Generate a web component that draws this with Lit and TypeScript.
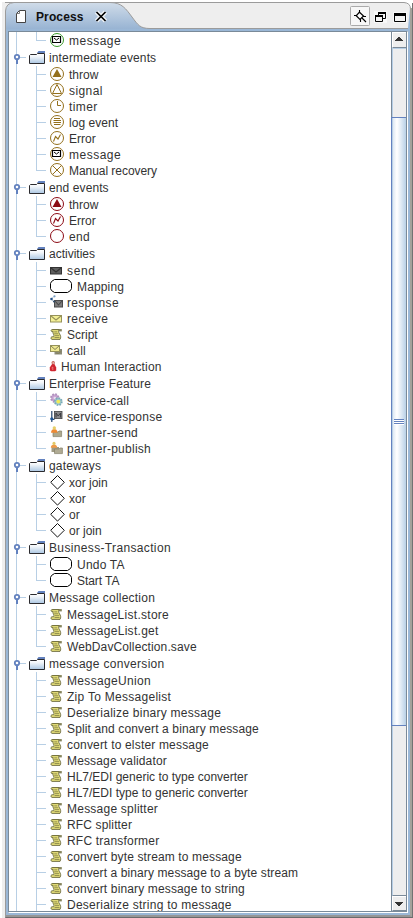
import { LitElement, html, css, svg, nothing } from "lit";
import { customElement, property } from "lit/decorators.js";

type Leaf = [icon: string, label: string];
interface Group { label: string; items: Leaf[]; }

const scripts = (...labels: string[]): Leaf[] => labels.map((l) => ["script", l] as Leaf);

const GROUPS: Group[] = [
  { label: "", items: [["msg-green", "message"]] },
  { label: "intermediate events", items: [
    ["throw", "throw"], ["signal", "signal"], ["timer", "timer"], ["log", "log event"],
    ["error", "Error"], ["msg", "message"], ["manual", "Manual recovery"]] },
  { label: "end events", items: [["throw-red", "throw"], ["error-red", "Error"], ["end", "end"]] },
  { label: "activities", items: [
    ["send", "send"], ["task", "Mapping"], ["response", "response"], ["receive", "receive"],
    ["script", "Script"], ["call", "call"], ["human", "Human Interaction"]] },
  { label: "Enterprise Feature", items: [
    ["gears", "service-call"], ["service", "service-response"],
    ["partner", "partner-send"], ["publish", "partner-publish"]] },
  { label: "gateways", items: [["gate", "xor join"], ["gate", "xor"], ["gate", "or"], ["gate", "or join"]] },
  { label: "Business-Transaction", items: [["task", "Undo TA"], ["task", "Start TA"]] },
  { label: "Message collection", items: scripts("MessageList.store", "MessageList.get", "WebDavCollection.save") },
  { label: "message conversion", items: scripts(
    "MessageUnion", "Zip To Messagelist", "Deserialize binary message",
    "Split and convert a binary message", "convert to elster message", "Message validator",
    "HL7/EDI generic to type converter", "HL7/EDI type to generic converter", "Message splitter",
    "RFC splitter", "RFC transformer", "convert byte stream to message",
    "convert a binary message to a byte stream", "convert binary message to string",
    "Deserialize string to message") },
];

/* Extra pixels that whole-pixel glyph advances add to each label. */
const EXTRA: Record<string, number> = {
  message: 3.5, "intermediate events": 2.5, signal: 2.5, timer: 2, "log event": 0.5, "Manual recovery": -0.7,
  "end events": 1, end: 1, send: 2.5, Mapping: 1, response: 2.5, receive: 2.5, call: 1,
  "Human Interaction": 2.5, "Enterprise Feature": 2.7, "service-call": 2, "service-response": 4,
  "partner-send": 3, "partner-publish": 4, gateways: 1.5, "Business-Transaction": 7,
  "Undo TA": 1.5, "Start TA": -0.5, "Message collection": 4, "MessageList.store": 4.7, "MessageList.get": 4.3,
  "WebDavCollection.save": 2.5, "message conversion": 5.5, MessageUnion: 4, "Zip To Messagelist": 5,
  "Deserialize binary message": 6.7, "Split and convert a binary message": 4.5, "convert to elster message": 4.5,
  "Message validator": 2.5, "Message splitter": 3.7, "RFC splitter": 1.7, "RFC transformer": 3,
  "convert byte stream to message": 4, "convert a binary message to a byte stream": 4.3,
  "convert binary message to string": 4.5, "Deserialize string to message": 7.3,
};
const tracking = (label: string) => `letter-spacing:${((EXTRA[label] ?? 0) / label.length).toFixed(3)}px`;

const GOLD = "#94701c";
const RED = "#8c0a14";
const ring = (c: string) => svg`<circle cx="7" cy="7" r="6.5" fill="#fff" stroke=${c} stroke-width="1"/>`;
const bolt = (c: string) => svg`<path d="M3.5 10.5L5.5 5.5L8 8L10.5 3.5" fill="none" stroke=${c} stroke-width="1.1"/>`;
const solid = (c: string) => svg`<path d="M7 2L11.5 10H2.5Z" fill=${c}/>`;
const mail = svg`<path d="M2.5 3.5H10.5V9.5H2.5Z" fill="#fff" stroke="#000" stroke-width="1.2"/><path d="M4 5L6.5 7L9 5" fill="none" stroke="#000"/>`;
const envelope = (x: number, y: number, w: number, fill: string, line: string) => svg`
  <rect x=${x + 0.5} y=${y + 0.5} width=${w} height="6.5" fill=${fill} stroke=${line}/>
  <path d="M${x + 1} ${y + 1}L${x + 0.5 + w / 2} ${y + 5}L${x + w} ${y + 1}" fill="none" stroke=${line} stroke-width="1.1"/>`;

/* Width of the icon slot and its drawing, on a 14px high canvas. */
const ICONS: Record<string, [number, unknown]> = {
  "msg-green": [14, svg`${ring("#3a9a2a")}${mail}`],
  msg: [14, svg`${ring(GOLD)}${mail}`],
  throw: [14, svg`${ring(GOLD)}${solid(GOLD)}`],
  "throw-red": [14, svg`${ring(RED)}${solid(RED)}`],
  signal: [14, svg`${ring(GOLD)}<path d="M7 1.5L11.5 10.5H2.5Z" fill="none" stroke=${GOLD}/>`],
  timer: [14, svg`${ring(GOLD)}<path d="M7.5 2V6.5H11" fill="none" stroke=${GOLD}/>`],
  log: [14, svg`${ring(GOLD)}<path d="M4 3.5H10M3.5 5.5H11M3.5 7.5H11M4 9.5H10.5" stroke=${GOLD}/>`],
  error: [14, svg`${ring(GOLD)}${bolt(GOLD)}`],
  "error-red": [14, svg`${ring(RED)}${bolt(RED)}`],
  manual: [14, svg`${ring(GOLD)}<path d="M2.5 2.5L11.5 11.5M11.5 2.5L2.5 11.5" stroke=${GOLD}/>`],
  end: [14, ring(RED)],
  gate: [14, svg`<path d="M7.5 0.5L14.3 7.3L7.5 14.1L0.7 7.3Z" fill="#fff" stroke="#111"/>`],
  task: [22, svg`<path d="M4.5 .5H17.5L20.5 2.5L21.5 4.5V9.5L20.5 11.5L17.5 13.5H4.5L1.5 11.5L.5 9.5V4.5L1.5 2.5Z" fill="#fff" stroke="#000"/>`],
  send: [12, envelope(0, 4, 11, "#5e5e5e", "#333")],
  receive: [12, envelope(0, 4, 11, "#f4f096", "#96925a")],
  response: [12, svg`${envelope(4, 5, 8, "#7c7c7c", "#4a4a4a")}
    <path d="M1 4L4 1.5M1 4L4 7" stroke="#b6c6d8" stroke-width="1"/>
    <circle cx="1.5" cy="4" r="1.3" fill="#28568c"/><circle cx="4.5" cy="1.3" r="1.1" fill="#7b9fc4"/><circle cx="4" cy="6.5" r="1.1" fill="#35516f"/>`],
  call: [12, svg`<path d="M4.5 6H12V11.5H4.5Z" fill="#8b8b7a"/>
    <rect x="0.5" y="2.5" width="9" height="6" fill="#eee890" stroke="#96925a"/>
    <path d="M1 3L5 6.5L9 3M6 10L8.5 10.5L11.5 8" fill="none" stroke="#858158"/>`],
  script: [12, svg`
    <path d="M2.5 2.5H9.2C8 4 8.6 5 9.5 6.8C10.6 8.6 11.3 10.2 10 12.4H2C.6 12 .6 10.4 1.8 9.8H3.8C4.4 8.4 3.4 7.2 3 6C2.7 5.2 2.9 4.8 3.1 4.4H1.5C0.8 3.6 1.2 2.5 2.5 2.5Z" fill="#e9e37c" stroke="#68663c" stroke-width=".9"/>
    <path d="M1.8 2.6H11.6M4.2 4.9H7.3M4.2 6.8H8.3M5 8.7H9.2M4.5 10.6H9.5" stroke="#76733d" stroke-width=".8"/>
    <path d="M9 2.4H11.8V4.4H9Z" fill="#85835c"/>`],
  human: [6, svg`<path d="M2.4 4.5H4.2L6.2 8.5V11.5L5 12.3H1L-.2 11.5V8.5Z" fill="#cf2630"/>
    <circle cx="3.2" cy="3.7" r="1.7" fill="#c0645c"/><path d="M2.4 3H4.2L4.5 5H2.6Z" fill="#e4a59c"/><path d="M1.5 9L2.8 8V11" stroke="#f17b7b" fill="none"/>`],
  gears: [12, svg`<circle cx="4.8" cy="5" r="3.7" fill="#c7a4d2" stroke="#b092bd" stroke-width="2" stroke-dasharray="1.7 1.2"/>
    <circle cx="4.8" cy="5" r="1.3" fill="#e9dcee"/>
    <circle cx="8.3" cy="8.6" r="3.5" fill="#9cc8d0" stroke="#7aa9b5" stroke-width="1.8" stroke-dasharray="1.6 1.1"/>
    <circle cx="8.3" cy="8.6" r="1.9" fill="#f1ea55"/>`],
  service: [12, svg`<rect x="4.4" y="2.4" width="7.6" height="7.2" fill="#87878a" stroke="#444" stroke-width=".8"/>
    <path d="M6 8.5V4L8.2 7L10.6 4V8.5" fill="none" stroke="#3a3a3e"/>
    <path d="M1.8 2V13M1 10.5H4.5" stroke="#26456c" stroke-width="1.2"/><circle cx="1.8" cy="9.8" r="1.6" fill="#1e5594"/>`],
  partner: [12, svg`<path d="M3 7H8L9 6H11.6V11.6H3Z" fill="#aea98e" stroke="#848069" stroke-width=".7"/>
    <path d="M1 7.8C1 5 3 4 4.3 4S7.5 5 7.5 7.8Z" fill="#ef8a34"/><circle cx="4.3" cy="3" r="1.7" fill="#e6cf68"/>`],
  publish: [12, svg`<path d="M1.5 6H9V11H1.5Z" fill="#9e9a84"/><path d="M4.5 8H9L10 7H12.4V12.6H4.5Z" fill="#b0ab94" stroke="#848069" stroke-width=".7"/>
    <path d="M0.8 6.8C0.8 4.5 2.5 3.5 4 3.5S7.2 4.5 7.2 6.8Z" fill="#ef9a48"/><circle cx="4" cy="2.4" r="1.6" fill="#e2c968"/>`],
};

@customElement("tree-leaf")
class TreeLeaf extends LitElement {
  @property() icon = "";
  @property() label = "";
  static styles = css`
    :host { display: flex; height: 16px; padding-left: 41px; }
    svg { display: block; flex: none; margin-top: 1px; overflow: visible; }
    .text { margin-left: 5px; line-height: 19px; height: 16px; white-space: pre; }
  `;
  render() {
    const [w, art] = ICONS[this.icon];
    return html`<svg width=${w} height="14" viewBox="0 0 ${w} 14">${art}</svg><span class="text" style=${tracking(this.label)}>${this.label}</span>`;
  }
}

@customElement("tree-group")
class TreeGroup extends LitElement {
  @property({ attribute: false }) group!: Group;
  static styles = css`
    :host { display: block; }
    .head { display: flex; height: 18px; }
    .head svg { display: block; flex: none; }
    .name { margin-left: 4px; line-height: 21px; white-space: pre; }
    .row { display: flex; background: linear-gradient(#b8cfe5, #b8cfe5) 27px 0 / 1px 16px no-repeat,
      linear-gradient(#b8cfe5, #b8cfe5) 28px 8px / 9px 1px no-repeat; }
    .row.last { background-size: 1px 9px, 9px 1px; }
  `;
  render() {
    const { label, items } = this.group;
    const last = label === "message conversion" ? -1 : items.length - 1;
    return html`
      ${label ? html`<div class="head">
        <svg width="36" height="18" viewBox="0 0 36 18">
          <defs><linearGradient id="f" x1="0" y1="0" x2="0" y2="1"><stop offset="0" stop-color="#fff"/><stop offset=".3" stop-color="#f2f6fa"/><stop offset="1" stop-color="#aac6e2"/></linearGradient></defs>
          <path d="M11 9.5H17" stroke="#b8cfe5"/>
          <path d="M8 11V16" stroke="#6382bf" stroke-width="2"/>
          <circle cx="8" cy="9" r="2.2" fill="#fff" stroke="#6382bf" stroke-width="1.8"/>
          <path d="M20.5 7.5L21.5 6.5H27.5L28.5 5.5H35.5V15.5H20.5Z" fill="url(#f)" stroke="#2a2a2e"/>
          <path d="M28 5L29.5 3H36V5Z" fill="#6382bf"/>
        </svg><span class="name" style=${tracking(label)}>${label}</span></div>` : nothing}
      ${items.map(([icon, text], i) => html`<tree-leaf class="row ${i === last ? "last" : ""}" .icon=${icon} .label=${text}></tree-leaf>`)}`;
  }
}

@customElement("app-root")
class AppRoot extends LitElement {
  static styles = css`
    :host { display: flex; flex-direction: column; width: 413px; height: 918px; box-sizing: border-box; overflow: hidden;
      background: #fff; color: #333; font: 12px "Liberation Sans", Arial, sans-serif; }
    .bar { height: 29px; flex: none; display: grid; }
    .bar > * { grid-area: 1 / 1; }
    .bar svg { display: block; }
    .caption { display: flex; align-items: center; height: 29px; padding-top: 5px; box-sizing: border-box; }
    .title { margin-left: 36px; width: 60px; font-weight: bold; color: #111; line-height: 20px; letter-spacing: .12px; }
    .body { flex: 1; min-height: 0; display: flex; border-left: 2px solid #fff; background: #eee; }
    .shell { flex: 1; display: flex; min-width: 0; margin-left: 3px; box-sizing: border-box;
      border-left: 1px solid #9a9a9a; border-right: 1px solid #727272; border-bottom: 1px solid #6b6b6b; }
    .gray { flex: 1; min-width: 0; display: flex; border-right: 2px solid #a5a29b; border-bottom: 2px solid #969696; }
    .blue { flex: 1; min-width: 0; display: flex; border: 2px solid #9ab7d6; box-sizing: border-box; }
    .pane { flex: 1; min-width: 0; display: flex; background: #fff; box-sizing: border-box;
      border: 1px solid #7a8a99; border-right: 1px solid #fff; border-bottom-color: #fff; }
    .inner { flex: 1; min-width: 0; display: flex; border-right: 1px solid #7a8a99; border-bottom: 1px solid #7a8a99; }
    .tree { flex: 1; min-width: 0; overflow: hidden; background: linear-gradient(#b8cfe5, #b8cfe5) 7px 0 / 1px 100% no-repeat; }
    .scroll { width: 14px; flex: none; display: flex; flex-direction: column; border-left: 1px solid #7a8a99; background: #eee; }
    .step { height: 15px; flex: none; border-left: 1px solid #fff; box-sizing: border-box; }
    .step svg { display: block; }
    .up { border-bottom: 1px solid #7a8a99; height: 16px; border-top: 1px solid #fff; }
    .down { border-top: 1px solid #fff; border-bottom: 1px solid #7a8a99; height: 15px; }
    .track { flex: 1; display: flex; flex-direction: column; border-top: 1px solid #b8cfe5; border-left: 1px solid #b8cfe5; border-bottom: 1px solid #7a8a99; }
    .thumb { height: 607px; margin: 68px 0 0 -2px; border: 1px solid #6382bf; border-right: 0; display: flex; align-items: center; justify-content: center;
      background: linear-gradient(90deg, #b8cfe5 0 1px, #dde8f3 1px, #fff 35%, #c4d8eb 90%, #b8cfe5); }
    .grip { width: 10px; height: 6px; background: repeating-linear-gradient(#6382bf 0 1px, #fff 1px 2px); }
  `;
  render() {
    return html`
      <div class="bar">
        <svg width="413" height="29" viewBox="0 0 413 29">
          <defs><linearGradient id="tab" x1="0" y1="0" x2="0" y2="1"><stop offset="0" stop-color="#d0dce9"/><stop offset="1" stop-color="#98b4d3"/></linearGradient></defs>
          <path d="M2 2H405L411 8V29H2Z" fill="#eee"/>
          <path d="M5 2.5H404Q410.5 3 410.5 9" fill="none" stroke="#9b9b9b"/>
          <path d="M408 28V29H410V8Z" fill="#9ab7d6"/>
          <path d="M410 8H412V29H410Z" fill="#a5a29b"/><path d="M412 3H413V29H412Z" fill="#727272"/>
          <path d="M5.5 29V11Q6 3 14 2.5H110C122 2.5 126 9 132 17S140 28.5 150 28.5V29Z" fill="url(#tab)"/>
          <path d="M5.5 29V11Q6 3 14 2.5H110C122 2.5 126 9 132 17S140 28.5 150 28.5H408" fill="none" stroke="#9b9b9b"/>
          <path d="M19.5 10.5H25.5V22.5H16.5V13.5Z" fill="#fff" stroke="#444"/><path d="M16.5 13.5H19.5V10.5" fill="none" stroke="#777"/>
          <path d="M96.5 12L105.5 21M105.5 12L96.5 21" stroke="#fff" stroke-width="4.5" opacity=".8"/>
          <path d="M96.5 12L105.5 21M105.5 12L96.5 21" stroke="#000" stroke-width="1.7"/>
          <rect x="350.5" y="6.5" width="19" height="19" rx="1" fill="#f7f7f7" stroke="#aaa"/>
          <path d="M359.5 12.2L363.5 16L360 19.5L356.2 15.8Z" fill="#fff" stroke="#000" stroke-width="1.2"/>
          <path d="M359.5 10V13M354 15.5H357M363 16.5H366M360.5 19V22M362 18L366 22" fill="none" stroke="#000" stroke-width="1.1"/>
          <path d="M374 11H387V23H374Z" fill="#fff" opacity=".6"/>
          <path d="M378.5 12.5H385.5V18.5H378.5Z" fill="#f4f4f4" stroke="#000"/><path d="M378 12H386V14H378Z"/>
          <path d="M375.5 15.5H382.5V21.5H375.5Z" fill="#f4f4f4" stroke="#000"/><path d="M375 15H383V17H375Z"/>
          <path d="M393 12H407V23H393Z" fill="#fff" opacity=".6"/>
          <path d="M394.5 13.5H405.5V21.5H394.5Z" fill="#f4f4f4" stroke="#000"/><path d="M394 13H406V16H394Z"/>
        </svg>
        <div class="caption"><span class="title">Process</span></div>
      </div>
      <div class="body"><div class="shell"><div class="gray"><div class="blue"><div class="pane"><div class="inner">
        <div class="tree">${GROUPS.map((g) => html`<tree-group .group=${g}></tree-group>`)}</div>
        <div class="scroll">
          <div class="step up"><svg width="13" height="14" viewBox="0 0 13 14"><path d="M2 8H10V7H9V6H8V5H7V4H5V5H4V6H3V7H2Z" fill="#333"/></svg></div>
          <div class="track"><div class="thumb"><div class="grip"></div></div></div>
          <div class="step down"><svg width="13" height="14" viewBox="0 0 13 14"><path d="M2 5H10V6H9V7H8V8H7V9H5V8H4V7H3V6H2Z" fill="#333"/></svg></div>
        </div>
      </div></div></div></div></div></div>`;
  }
}
